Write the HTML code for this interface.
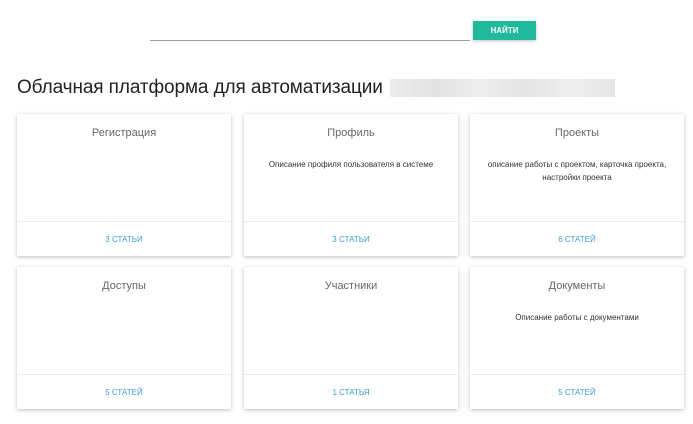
<!DOCTYPE html>
<html><head><meta charset="utf-8"><style>
*{margin:0;padding:0;box-sizing:border-box}
body{width:693px;height:424px;background:#fff;font-family:"Liberation Sans",sans-serif;position:relative;overflow:hidden}
.line{position:absolute;left:150px;top:40px;width:320px;height:1px;background:#9e9e9e}
.btn{position:absolute;left:473px;top:21px;width:63px;height:19px;background:#1fb99c;color:#fff;font-size:8px;font-weight:bold;text-align:center;line-height:19px;box-shadow:0 1px 3px rgba(0,0,0,.25)}
h1{position:absolute;left:17px;top:77px;font-size:19px;font-weight:normal;color:#222;white-space:nowrap;letter-spacing:-0.1px}
.blur{position:absolute;left:390px;top:79px;width:225px;height:18px;background:linear-gradient(90deg,#ececec,#e2e2e2 20%,#ededed 40%,#e4e4e4 60%,#eee 80%,#e6e6e6)}
.card{position:absolute;width:214px;height:142px;background:#fff;box-shadow:0 1px 4px rgba(0,0,0,.25)}
.t{position:absolute;top:13px;width:100%;text-align:center;font-size:11px;color:#666}
.d{position:absolute;top:44px;width:100%;text-align:center;font-size:8px;color:#333;line-height:13px;padding:0 8px}
.f{position:absolute;top:107px;left:0;right:0;border-top:1px solid #eee;height:35px;text-align:center;line-height:35px;font-size:8px;color:#3b9ed6}
</style></head><body>
<div class="line"></div><div class="btn">НАЙТИ</div>
<h1>Облачная платформа для автоматизации</h1><div class="blur"></div>
<div class="card" style="left:17px;top:114px"><div class="t">Регистрация</div><div class="f">3 СТАТЬИ</div></div>
<div class="card" style="left:244px;top:114px"><div class="t">Профиль</div><div class="d">Описание профиля пользователя в системе</div><div class="f">3 СТАТЬИ</div></div>
<div class="card" style="left:470px;top:114px"><div class="t">Проекты</div><div class="d">описание работы с проектом, карточка проекта, настройки проекта</div><div class="f">6 СТАТЕЙ</div></div>
<div class="card" style="left:17px;top:267px"><div class="t">Доступы</div><div class="f">5 СТАТЕЙ</div></div>
<div class="card" style="left:244px;top:267px"><div class="t">Участники</div><div class="f">1 СТАТЬЯ</div></div>
<div class="card" style="left:470px;top:267px"><div class="t">Документы</div><div class="d">Описание работы с документами</div><div class="f">5 СТАТЕЙ</div></div>
</body></html>
